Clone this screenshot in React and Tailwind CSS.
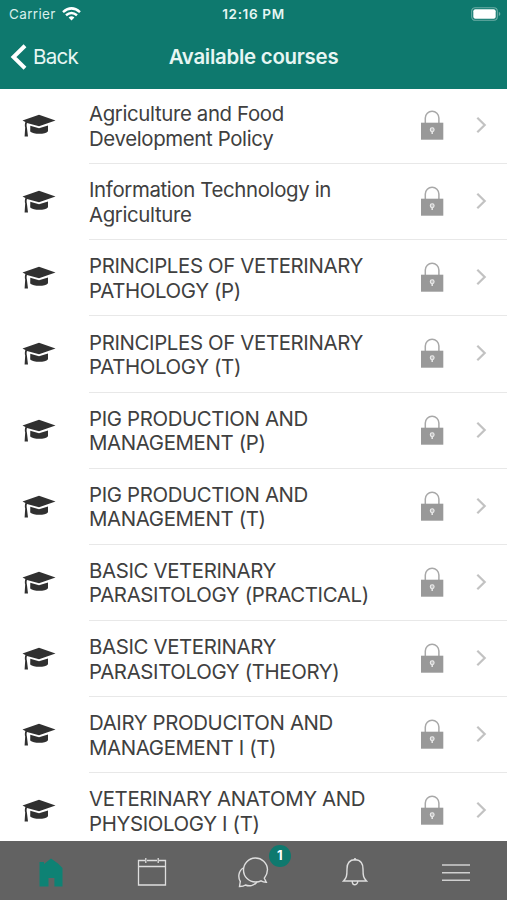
import React from 'react';

const courses = [
  ['Agriculture and Food', 'Development Policy'],
  ['Information Technology in', 'Agriculture'],
  ['PRINCIPLES OF VETERINARY', 'PATHOLOGY (P)'],
  ['PRINCIPLES OF VETERINARY', 'PATHOLOGY (T)'],
  ['PIG PRODUCTION AND', 'MANAGEMENT (P)'],
  ['PIG PRODUCTION AND', 'MANAGEMENT (T)'],
  ['BASIC VETERINARY', 'PARASITOLOGY (PRACTICAL)'],
  ['BASIC VETERINARY', 'PARASITOLOGY (THEORY)'],
  ['DAIRY PRODUCITON AND', 'MANAGEMENT I (T)'],
  ['VETERINARY ANATOMY AND', 'PHYSIOLOGY I (T)'],
];

function GraduationCap() {
  return (
    <svg className="h-6 w-[34px] shrink-0" viewBox="0 0 34 24" fill="#303030">
      <path d="M17 .8 33.5 6.6 17 12.3 5 8.9C4.4 10.2 4.6 12 4.9 13.5L6 22.5H2.6L3.2 13.5C2.6 12 2.8 9.8 3.4 8.1L.5 6.6Z" />
      <path d="M8.3 11.8 17 14.3 26 11.6V17.2C23.5 20.6 11.6 20.6 8.2 17.4Z" />
    </svg>
  );
}

function Lock() {
  return (
    <svg className="mb-[3px] h-[30px] w-6 shrink-0" viewBox="0 0 24 30">
      <path d="M5.3 13V8A6.8 6.8 0 0 1 18.9 8V13" fill="none" stroke="#a8a8a8" strokeWidth="1.5" />
      <rect x="1" y="12.7" width="22.3" height="17" fill="#999" />
      <circle cx="12.2" cy="19.7" r="1.9" fill="#bbb" stroke="#eee" strokeWidth="1.1" />
      <path d="M12.2 21V24" stroke="#e5e5e5" strokeWidth="1.6" />
    </svg>
  );
}

function CourseRow({ lines }) {
  return (
    <li className="flex h-[76.15px] shrink-0 pl-[21.5px]">
      <div className="flex w-[67.5px] shrink-0 items-center">
        <GraduationCap />
      </div>
      <div className="flex min-w-0 flex-1 items-center border-b border-[#e8e8e8] pt-[2px]">
        <div className="w-[331px] whitespace-nowrap text-[20.4px] leading-[24.4px] tracking-[-0.36px] text-[#404040]">
          {lines.map((line) => (
            <div key={line}>{line}</div>
          ))}
        </div>
        <Lock />
        <svg className="mb-[3px] ml-[32px] h-[18px] w-3 shrink-0" viewBox="0 0 12 18" fill="none" stroke="#c2c2c2" strokeWidth="2.2">
          <path d="M1.3 1.7 8.7 9 1.3 16.3" />
        </svg>
      </div>
    </li>
  );
}

export default function App() {
  return (
    <div className="flex h-[900px] w-[507px] flex-col overflow-hidden bg-white font-['Inter','Liberation_Sans',sans-serif]">
      <header className="h-[88.5px] shrink-0 bg-[#0e796e] text-white">
        <div className="grid h-[27px] grid-cols-3 items-center text-[13.5px] leading-4">
          <div className="flex items-center gap-[6px] pl-[9px] text-[#d8efeb]">
            <span className="w-[47px] tracking-[0.35px]">Carrier</span>
            <svg className="h-[14px] w-[19px]" viewBox="0 0 19 14" fill="none" stroke="#fff" strokeWidth="2.5">
              <path d="M1 5.1Q9.5-2.3 18 5.1M4 8.3Q9.5 3.6 15 8.3" />
              <path d="M6.6 10.6Q9.5 8.1 12.4 10.6L9.5 13.5Z" fill="#fff" stroke="none" />
            </svg>
          </div>
          <div className="text-center font-semibold tracking-[0.65px] text-[#e6f6f3]">12:16 PM</div>
          <div className="flex justify-end pr-[6px]">
            <svg className="h-[14px] w-[30px]" viewBox="0 0 30 14">
              <rect x=".7" y=".7" width="25.6" height="12.6" rx="3.5" fill="none" stroke="#6dada6" strokeWidth="1.1" />
              <rect x="2.3" y="2.3" width="22.4" height="9.4" rx="2" fill="#fff" />
              <path d="M27.8 4.8Q31 7 27.8 9.2Z" fill="#6dada6" />
            </svg>
          </div>
        </div>
        <div className="grid h-[60px] grid-cols-[110px_1fr_110px] items-center">
          <div className="flex items-center pl-[10px] text-[20.6px] tracking-[-0.8px] text-[#e6f6f3]">
            <svg className="mr-[6px] h-[26px] w-[17px]" viewBox="0 0 17 26" fill="none" stroke="#fff" strokeWidth="4">
              <path d="M15 1.7 3.5 13 15 24.3" />
            </svg>
            Back
          </div>
          <h1 className="whitespace-nowrap text-center text-[20.4px] font-semibold tracking-[-0.25px] text-[#e6f6f3]">
            Available courses
          </h1>
        </div>
      </header>

      <ul className="-mt-[0.5px] flex min-h-0 flex-1 flex-col overflow-hidden">
        {courses.map((lines, i) => (
          <CourseRow key={i} lines={lines} />
        ))}
      </ul>

      <nav className="grid h-[59px] shrink-0 grid-cols-5 items-center bg-[#626262] text-[#dedede]">
        <div className="flex justify-center pt-[2px]">
          <svg className="h-8 w-7" viewBox="0 0 28 32" fill="#0e8274">
            <path d="M2.5 6H7V8L14 2.5 21 7.5 25.5 12V30.5H17.4V22H11.5V30.5H2.5Z" />
          </svg>
        </div>
        <div className="flex justify-center pt-[2px]">
          <svg className="h-[30px] w-[30px]" viewBox="0 0 30 30" fill="none" stroke="currentColor" strokeWidth="1.3">
            <path d="M8 3.5H1.5V28H28.5V3.5H22M10 3.5H20M1.5 9.5H28.5M8.8 1V6M21.2 1V6" />
          </svg>
        </div>
        <div className="relative flex justify-center pt-[2px]">
          <svg className="h-8 w-8" viewBox="0 0 32 32" fill="none" stroke="currentColor" strokeWidth="1.4">
            <path d="M27.3 22.2C29 20 30.5 17 30.5 13.5A12 12 0 1 0 18.5 26C20.5 26 22.5 25.7 24 24.8 25.5 25.7 27 26.1 29.3 26.2Z" />
            <path d="M6.3 12C1 15 1 22 3.3 25.5L2.5 30.5C5 30.5 7 30.2 8.5 29 12 30.5 17 30 20 26" />
          </svg>
          <span className="absolute -top-[9px] left-[66px] flex size-[22px] items-center justify-center rounded-full bg-[#0e796e] text-[13px] font-bold text-white">
            1
          </span>
        </div>
        <div className="flex justify-center pt-[2px]">
          <svg className="h-[30px] w-[26px]" viewBox="0 0 26 30" fill="none" stroke="currentColor" strokeWidth="1.4">
            <path d="M13 2.8C7 2.8 5 7 5 12 5 19 4.5 21 1.5 24H24.5C21.5 21 21 19 21 12 21 7 19 2.8 13 2.8ZM10.2 24A2.8 3.8 0 0 0 15.8 24" />
            <circle cx="13" cy="2.3" r="1.2" fill="currentColor" stroke="none" />
          </svg>
        </div>
        <div className="flex justify-center pt-[4px]">
          <svg className="h-5 w-7" viewBox="0 0 28 20" stroke="#d0d0d0" strokeWidth="1.5">
            <path d="M0 2H28M0 9.7H28M0 17.2H28" />
          </svg>
        </div>
      </nav>
    </div>
  );
}
